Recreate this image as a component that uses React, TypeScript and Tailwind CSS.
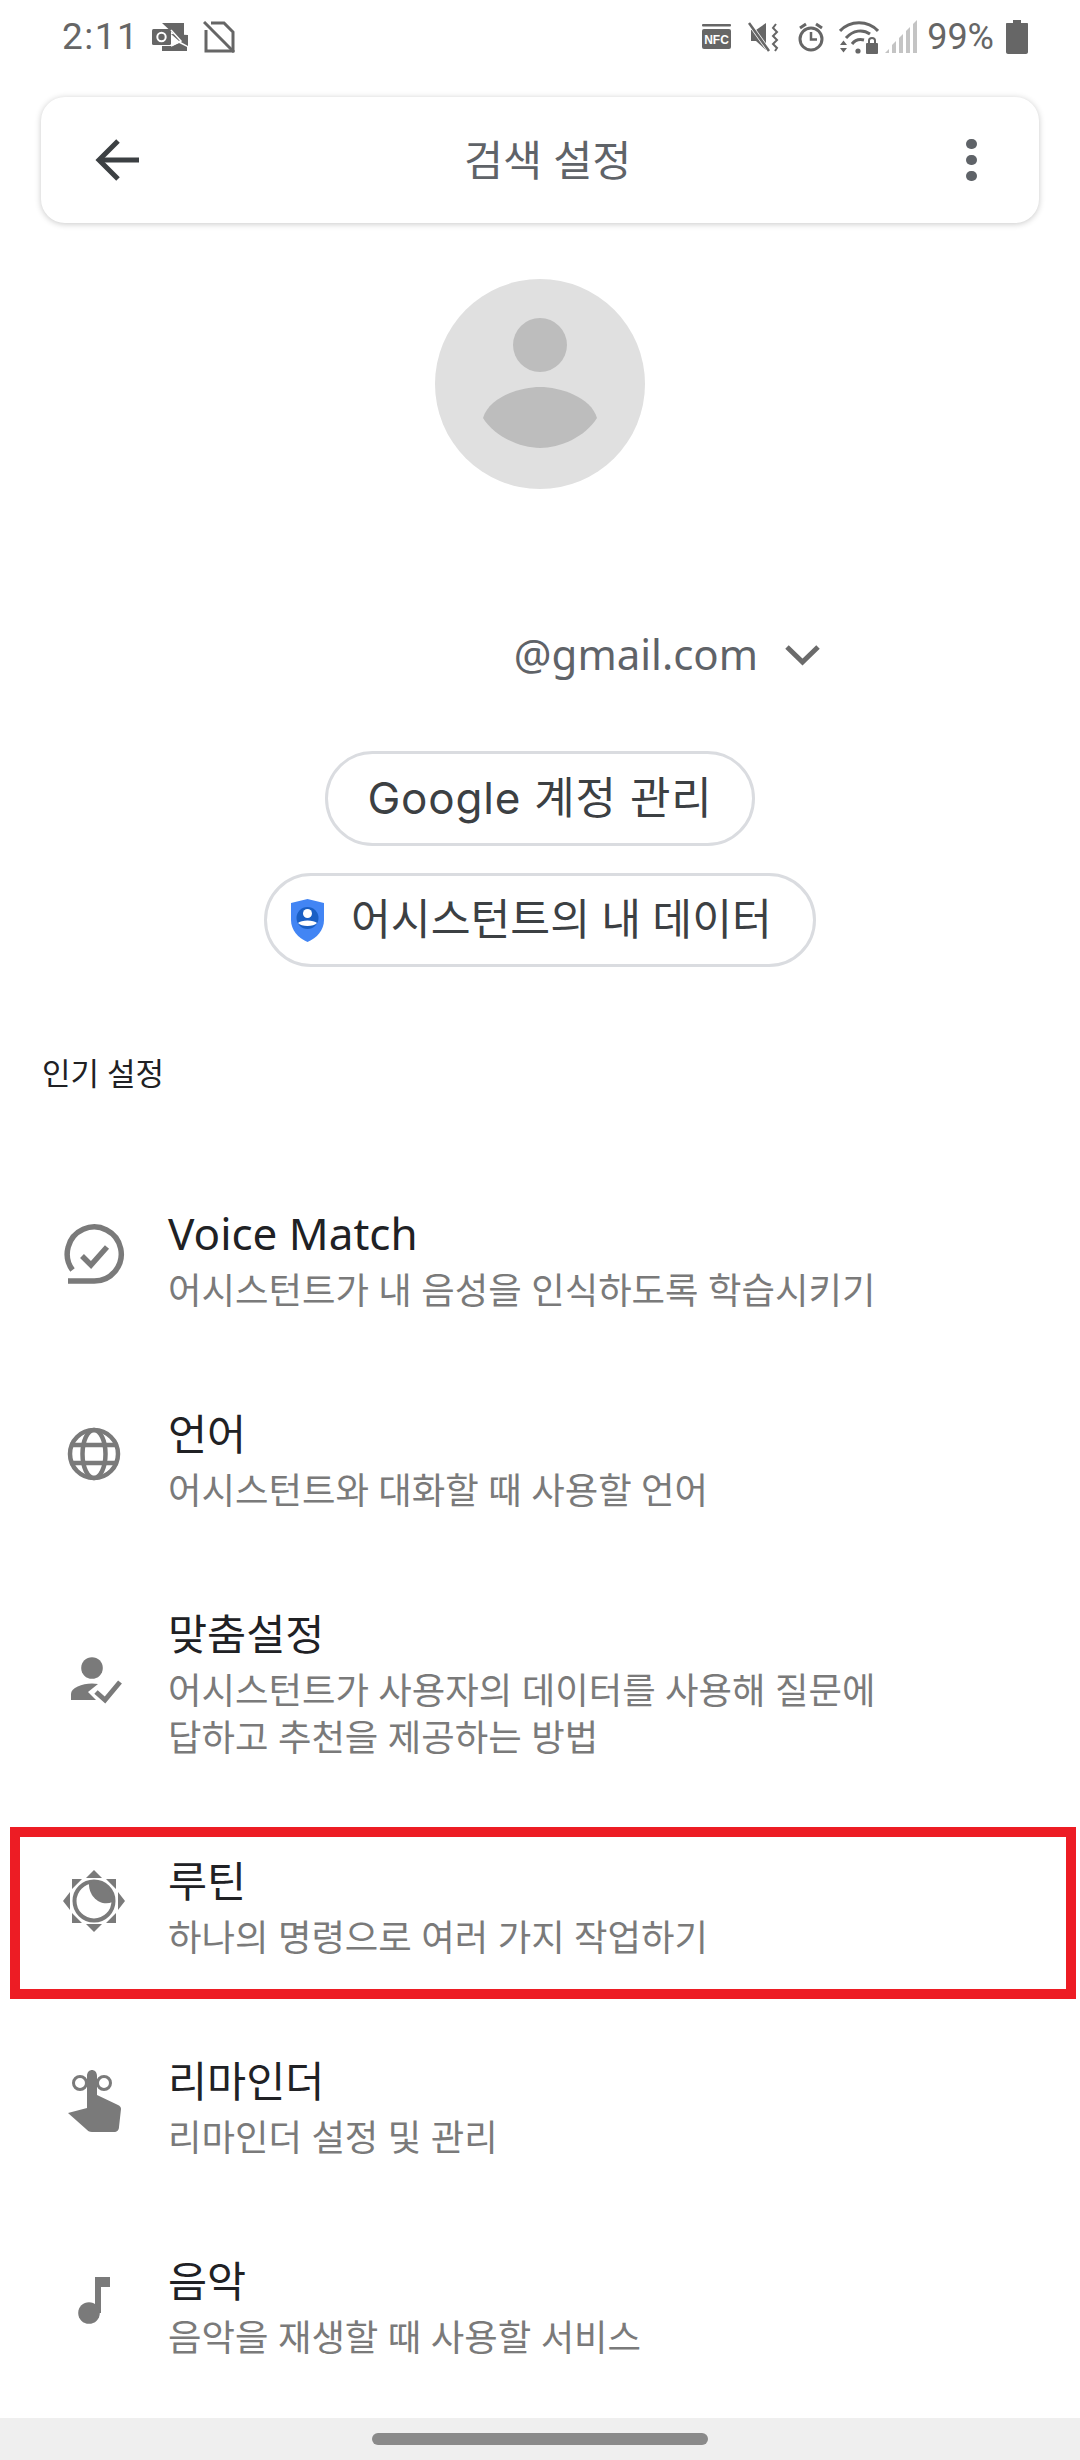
import React from "react";

const G = "#7a7a7a";

function OutlookIcon() {
  return (
    <svg width="36" height="30" viewBox="0 0 36 30" className="ml-[13px]">
      <path d="M10 1H32V14L24 14Z" fill="#666" />
      <rect x="0" y="7" width="19" height="16" rx="1.5" fill="#666" />
      <circle cx="9.5" cy="15" r="4.2" fill="none" stroke="#fff" strokeWidth="2" />
      <path d="M19 12L36 13V24L27 19Z" fill="#666" />
      <path d="M10 24H20L27 21L35 25V29H10Z" fill="#666" />
      <path d="M19 8L29 19L19 24" fill="none" stroke="#fff" strokeWidth="1.5" />
    </svg>
  );
}

function SimOffIcon() {
  return (
    <svg width="32" height="32" viewBox="0 0 32 32" className="ml-[15px]">
      <path d="M8 2H21L30 11V30H3V9" fill="none" stroke="#666" strokeWidth="3" />
      <path d="M1 1L31 31" stroke="#666" strokeWidth="3" />
    </svg>
  );
}

function NfcIcon() {
  return (
    <svg width="29" height="25" viewBox="0 0 29 25">
      <rect x="0" y="0" width="29" height="2.5" rx="1" fill="#666" />
      <rect x="0" y="5" width="29" height="20" rx="2" fill="#666" />
      <text x="14.5" y="20" textAnchor="middle" fontSize="12" fontWeight="700" fill="#fff" fontFamily="Liberation Sans, sans-serif">NFC</text>
    </svg>
  );
}

function MuteIcon() {
  return (
    <svg width="32" height="30" viewBox="0 0 32 30" className="ml-[17px]">
      <path d="M3 8H8L18 1V28L8 19H3Z" fill="#666" />
      <path d="M1 1L21 29" stroke="#fff" strokeWidth="4" />
      <path d="M1 1L21 29" stroke="#666" strokeWidth="2.5" />
      <path d="M28 2L25 6L29 10L25 14L29 18L25 22L29 26L27 29" fill="none" stroke="#666" strokeWidth="2" />
    </svg>
  );
}

function AlarmIcon() {
  return (
    <svg width="26" height="30" viewBox="0 0 26 30" className="ml-[18px]">
      <circle cx="13" cy="17" r="11" fill="none" stroke="#666" strokeWidth="3" />
      <path d="M13 10V17.5H19" fill="none" stroke="#666" strokeWidth="2.5" />
      <path d="M2 6L8 2M24 6L18 2" stroke="#666" strokeWidth="3" />
    </svg>
  );
}

function WifiIcon() {
  return (
    <svg width="40" height="34" viewBox="0 0 40 34" className="ml-[15px]">
      <path d="M1 11C11 0 29 0 39 11" fill="none" stroke="#666" strokeWidth="3" />
      <path d="M7 18C14 10 24 9 31 14" fill="none" stroke="#666" strokeWidth="3" />
      <path d="M13 24C16 20 21 19 25 20" fill="none" stroke="#666" strokeWidth="3" />
      <circle cx="19" cy="31" r="2.6" fill="#666" />
      <path d="M1 25H8L4.500 20.500ZM1 28H8L4.500 32.500Z" fill="#666" />
      <rect x="27" y="23" width="12" height="11" rx="1" fill="#666" />
      <path d="M30 23V20.500C30 17 36 17 36 20.500V23" fill="none" stroke="#666" strokeWidth="2" />
    </svg>
  );
}

function SignalIcon() {
  return (
    <svg width="33" height="34" viewBox="0 0 33 34" className="ml-[6px]">
      <path d="M0 33L4 29V33ZM7 33V25L11 21V33ZM14 33V18L18 14V33ZM21 33V11L25 7V33ZM28 33V4L32 0V33Z" fill="#c4c4c4" />
    </svg>
  );
}

function BatteryIcon() {
  return (
    <svg width="22" height="34" viewBox="0 0 22 34" className="ml-[12px]">
      <path d="M7 0H15V3H21C21.600 3 22 3.400 22 4V32C22 33 21 34 20 34H2C1 34 0 33 0 32V4C0 3.400 0.400 3 1 3H7Z" fill="#666" />
    </svg>
  );
}

function VoiceIcon() {
  return (
    <svg width="62" height="62" viewBox="0 0 62 62" fill="none" stroke={G}>
      <path d="M9.500 47A27 27 0 1 1 31 58H5" strokeWidth="5.500" />
      <path d="M19 33L28 42L44 24" strokeWidth="5.500" />
    </svg>
  );
}

function GlobeIcon() {
  return (
    <svg width="62" height="62" viewBox="0 0 62 62" fill="none" stroke={G} strokeWidth="4.500">
      <circle cx="31" cy="31" r="24" />
      <ellipse cx="31" cy="31" rx="11.500" ry="24" />
      <path d="M7 22H55M7 40H55" />
    </svg>
  );
}

function PersonCheckIcon() {
  return (
    <svg width="62" height="62" viewBox="0 0 62 62">
      <circle cx="29" cy="21" r="10.800" fill={G} />
      <path d="M8 53V47C8 41 19 36.500 29 36.500C31 36.500 33 36.700 35 37L25 45L33 53Z" fill={G} />
      <path d="M33 45L42 53L57 35" fill="none" stroke={G} strokeWidth="5" />
    </svg>
  );
}

function RoutineIcon() {
  return (
    <svg width="62" height="62" viewBox="0 0 62 62">
      <path d="M31 0L39 8H23ZM31 62L39 54H23ZM0 31L7 22V40ZM62 31L55 22V40Z" fill={G} />
      <path d="M9 9H19L9 19ZM53 9H43L53 19ZM9 53H19L9 43ZM53 53H43L53 43Z" fill={G} />
      <circle cx="31" cy="31" r="19.500" fill="none" stroke={G} strokeWidth="4" />
      <path d="M26 12.500A18.500 18.500 0 0 1 49.500 32C38 37 25 27 26 12.500Z" fill={G} />
    </svg>
  );
}

function ReminderIcon() {
  return (
    <svg width="62" height="66" viewBox="0 0 62 66">
      <g transform="translate(5 1)">
        <circle cx="12" cy="14" r="6.500" fill="none" stroke={G} strokeWidth="3" />
        <circle cx="36" cy="14" r="6.500" fill="none" stroke={G} strokeWidth="3" />
        <path d="M19 7C19 -1 29 -1 29 7V26L50 36C52 37 53 38 53 40L51 58C51 61 49 63 46 63H24C21 63 20 62 18 60L0 44L19 39Z" fill={G} />
      </g>
    </svg>
  );
}

function MusicIcon() {
  return (
    <svg width="62" height="62" viewBox="0 0 62 62">
      <path d="M32 7H47V17H38V43H32Z" fill={G} />
      <circle cx="26" cy="43" r="10.800" fill={G} />
    </svg>
  );
}

function ShieldIcon() {
  return (
    <svg width="33" height="43" viewBox="0 0 33 43">
      <path d="M16.500 0L33 4V21C33 31 26 39 16.500 43C7 39 0 31 0 21V4Z" fill="#4285f4" />
      <circle cx="16.500" cy="19" r="11" fill="#1a5fc4" />
      <circle cx="16.500" cy="14.500" r="4.500" fill="#fff" />
      <path d="M7 24C10 20.500 23 20.500 26 24C23 28 10 28 7 24Z" fill="#fff" />
    </svg>
  );
}

const rows = [
  { icon: <VoiceIcon />, title: "Voice Match", titleClass: "text-[44px]", sub: ["어시스턴트가 내 음성을 인식하도록 학습시키기"] },
  { icon: <GlobeIcon />, title: "언어", titleClass: "text-[42.5px]", sub: ["어시스턴트와 대화할 때 사용할 언어"] },
  { icon: <PersonCheckIcon />, title: "맞춤설정", titleClass: "text-[42.5px]", sub: ["어시스턴트가 사용자의 데이터를 사용해 질문에", "답하고 추천을 제공하는 방법"] },
  { icon: <RoutineIcon />, title: "루틴", titleClass: "text-[42.5px]", sub: ["하나의 명령으로 여러 가지 작업하기"], boxed: true },
  { icon: <ReminderIcon />, title: "리마인더", titleClass: "text-[42.5px]", sub: ["리마인더 설정 및 관리"] },
  { icon: <MusicIcon />, title: "음악", titleClass: "text-[42.5px]", sub: ["음악을 재생할 때 사용할 서비스"] },
];

const FONT = "font-['Noto_Sans','Noto_Sans_CJK_KR',sans-serif]";

export default function App() {
  return (
    <div className={`relative flex h-[2460px] w-[1080px] flex-col overflow-hidden bg-white ${FONT}`}>
      <div className="flex h-[73px] shrink-0 items-center pl-[62px] pr-[52px]">
        <span className="font-['Roboto',sans-serif] text-[37px] leading-none tracking-[1.5px] text-[#666]">2:11</span>
        <OutlookIcon />
        <SimOffIcon />
        <div className="flex-1" />
        <NfcIcon />
        <MuteIcon />
        <AlarmIcon />
        <WifiIcon />
        <SignalIcon />
        <span className="ml-[9px] font-['Roboto',sans-serif] text-[36px] leading-none text-[#666]">99%</span>
        <BatteryIcon />
      </div>

      <div className="mx-[41px] mt-[24px] flex h-[126px] shrink-0 items-center justify-between rounded-[24px] bg-white pl-[54px] pr-[62px] shadow-[0_1px_6px_rgba(0,0,0,0.22)]">
        <svg width="44" height="42" viewBox="0 0 44 42" fill="none" stroke="#3c4043" strokeWidth="5">
          <path d="M44 21H4" />
          <path d="M23 2L4 21L23 40" />
        </svg>
        <span className="mr-[10px] text-[42.5px] leading-none text-[#5f6368]">검색 설정</span>
        <div className="flex flex-col gap-[5.500px]">
          <div className="h-[10.500px] w-[10.500px] rounded-full bg-[#5f6368]" />
          <div className="h-[10.500px] w-[10.500px] rounded-full bg-[#5f6368]" />
          <div className="h-[10.500px] w-[10.500px] rounded-full bg-[#5f6368]" />
        </div>
      </div>

      <div className="mt-[56px] flex shrink-0 justify-center">
        <svg width="210" height="210" viewBox="0 0 210 210">
          <circle cx="105" cy="105" r="105" fill="#e0e0e0" />
          <circle cx="105" cy="66" r="27" fill="#bdbdbd" />
          <path d="M48 139C54 118 85 108 105 108C125 108 156 118 162 139C150 158 125 169 105 169C85 169 60 158 48 139Z" fill="#bdbdbd" />
        </svg>
      </div>

      <div className="mt-[136px] flex h-[60px] shrink-0 items-center justify-end pr-[260px]">
        <span className="-translate-y-[1px] text-[42px] leading-none text-[#5f6368]">@gmail.com</span>
        <svg width="35" height="22" viewBox="0 0 35 22" fill="none" stroke="#6b6b6b" strokeWidth="5" className="ml-[27px]">
          <path d="M2 3L17.500 18L33 3" />
        </svg>
      </div>

      <div className="mt-[66px] flex shrink-0 justify-center">
        <div className="flex h-[95px] w-[430px] items-center justify-center rounded-full border-[3px] border-[#dadce0] bg-white">
          <span className="-translate-y-[1px] font-['Inter','Noto_Sans_CJK_KR',sans-serif] text-[44px] leading-none tracking-[0.8px] text-[#3c4043]">Google 계정 관리</span>
        </div>
      </div>

      <div className="mt-[27px] flex shrink-0 justify-center">
        <div className="flex h-[94px] w-[552px] items-center rounded-full border-[3px] border-[#dadce0] bg-white pl-[24px]">
          <ShieldIcon />
          <span className="ml-[27px] -translate-y-[1px] text-[43.3px] leading-none text-[#3c4043]">어시스턴트의 내 데이터</span>
        </div>
      </div>

      <div className="ml-[42px] mt-[86px] h-[40px] shrink-0 text-[31px] leading-[40px] text-[#202124]">인기 설정</div>

      <div className="mt-[107px] flex flex-1 flex-col gap-[86px]">
        {rows.map((r) => (
          <div key={r.title} className="relative flex items-center">
            <div className="flex w-[168px] shrink-0 -translate-y-[3px] pl-[63px]">{r.icon}</div>
            <div>
              <div className={`${r.titleClass} leading-[67px] text-[#202124]`}>{r.title}</div>
              {r.sub.map((s) => (
                <div key={s} className="text-[36.4px] leading-[47px] text-[#7a7a7a]">{s}</div>
              ))}
            </div>
            {r.boxed && (
              <div className="absolute left-[10px] top-[-20px] h-[172px] w-[1066px] border-[10px] border-[#ed1c24]" />
            )}
          </div>
        ))}
      </div>

      <div className="flex h-[42px] shrink-0 items-center justify-center bg-[#efefef]">
        <div className="h-[12px] w-[336px] rounded-full bg-[#8a8a8a]" />
      </div>
    </div>
  );
}
